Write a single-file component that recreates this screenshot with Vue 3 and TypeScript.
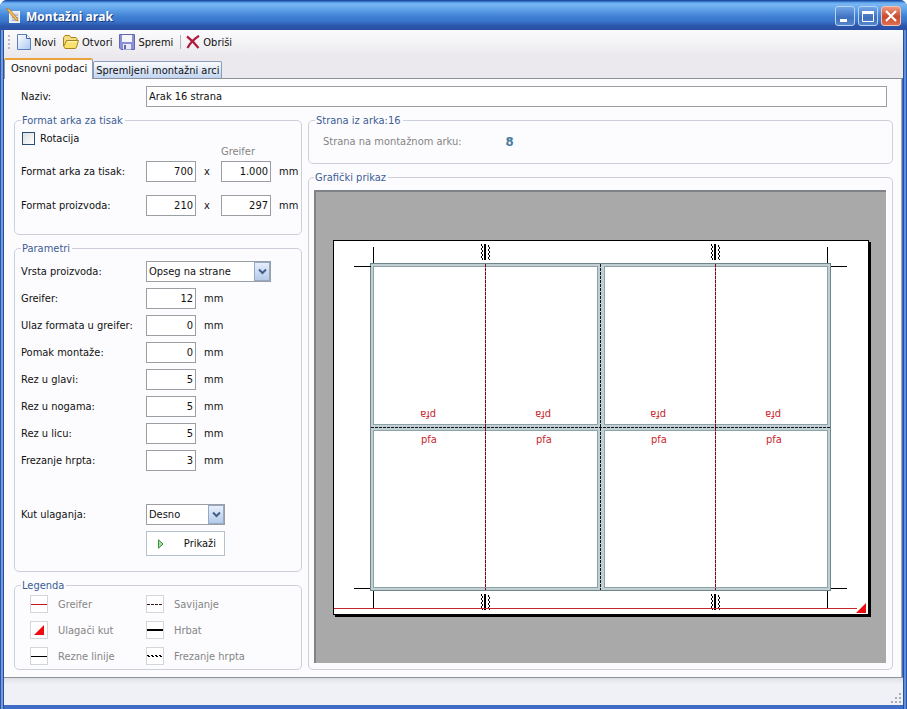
<script setup lang="ts">
import { reactive, ref } from 'vue'

interface Param {
  id: string
  label: string
  value: string
}

const tabs = ['Osnovni podaci', 'Spremljeni montažni arci']
const activeTab = ref(0)

const naziv = ref('Arak 16 strana')
const rotacija = ref(false)
const formatArka = reactive({ a: '700', b: '1.000' })
const formatProizvoda = reactive({ a: '210', b: '297' })
const vrsta = ref('Opseg na strane')
const kut = ref('Desno')

const params = reactive<Param[]>([
  { id: 'greifer', label: 'Greifer:', value: '12' },
  { id: 'ulaz', label: 'Ulaz formata u greifer:', value: '0' },
  { id: 'pomak', label: 'Pomak montaže:', value: '0' },
  { id: 'glava', label: 'Rez u glavi:', value: '5' },
  { id: 'noga', label: 'Rez u nogama:', value: '5' },
  { id: 'lice', label: 'Rez u licu:', value: '5' },
  { id: 'frezanje', label: 'Frezanje hrpta:', value: '3' },
])

const legendItems = [
  { kind: 'greifer', label: 'Greifer' },
  { kind: 'savijanje', label: 'Savijanje' },
  { kind: 'kut', label: 'Ulagači kut' },
  { kind: 'hrbat', label: 'Hrbat' },
  { kind: 'rez', label: 'Rezne linije' },
  { kind: 'frezanje', label: 'Frezanje hrpta' },
]

/* Sheet drawing, in preview units */
const pageColumns = [105, 220, 335, 450]
const foldLines = [169, 399]
const spineMarks = foldLines.flatMap((x) => [
  { x, y: 52 },
  { x, y: 402 },
])
</script>

<template>
  <div class="window">
    <header class="titlebar">
      <svg class="app-icon" width="16" height="18" viewBox="0 0 16 18" aria-hidden="true">
        <rect x="3.5" y="4.500" width="10" height="11" fill="#dfe7f5" stroke="#f4f4f4" />
        <path d="M6 8h6M6 10.500h6M6 13h5" stroke="#8798bd" />
        <path d="M0 1.500L3.500 2l8 9.500.5 2.500-2.500-1z" fill="#f5b851" stroke="#a06a24" stroke-width=".6" />
      </svg>
      <h1>Montažni arak</h1>
      <div class="window-buttons">
        <button type="button" aria-label="Minimize">
          <svg width="18" height="18" viewBox="0 0 18 18"><path d="M4 13.500h7" stroke="#fff" stroke-width="3" /></svg>
        </button>
        <button type="button" aria-label="Maximize">
          <svg width="18" height="18" viewBox="0 0 18 18"><path d="M3.500 4.500h11v10h-11z" fill="none" stroke="#fff" /><path d="M3 5.500h12" stroke="#fff" stroke-width="3" /></svg>
        </button>
        <button type="button" class="close" aria-label="Close">
          <svg width="18" height="18" viewBox="0 0 18 18"><path d="M4 4l10 10M14 4L4 14" stroke="#fff" stroke-width="2.200" /></svg>
        </button>
      </div>
    </header>

    <nav class="toolbar">
      <span class="grip"></span>
      <button type="button">
        <svg width="14" height="16" viewBox="0 0 14 16">
          <defs><linearGradient id="gNew" x2="1" y2="1"><stop stop-color="#fff" /><stop offset="1" stop-color="#a9c8f2" /></linearGradient></defs>
          <path d="M.5.5h9l4 4v11H.5z" fill="url(#gNew)" stroke="#5b7fb8" />
          <path d="M9.500.5v4h4" fill="#fff" stroke="#3c62a4" />
        </svg>
        Novi
      </button>
      <button type="button">
        <svg width="16" height="14" viewBox="0 0 16 14">
          <path d="M.5 11V2.500l1.500-2h4.500l1.500 2h5l1 1V7" fill="#f3dc80" stroke="#a8841c" />
          <path d="M.8 11.500L3.500 5.500h12l-2 6.500-1 1.500H2z" fill="#f9e36c" stroke="#a8841c" />
          <path d="M4.500 6.700h9.500" stroke="#fffbd0" />
        </svg>
        Otvori
      </button>
      <button type="button">
        <svg width="16" height="16" viewBox="0 0 16 16">
          <path d="M.5.500h15v15H2l-1.500-1.500z" fill="#8a90d8" stroke="#6468b4" />
          <path d="M3 1h10v7H3z" fill="#f4f6fc" />
          <path d="M4 10h8v5.500H4z" fill="#e8ebf5" />
          <path d="M5 11h2v4H5z" fill="#6468b4" />
        </svg>
        Spremi
      </button>
      <span class="separator"></span>
      <button type="button">
        <svg width="14" height="14" viewBox="0 0 14 14"><path d="M1 1.500Q7 6 12.500 13M13 .8Q5 6 1.500 13" fill="none" stroke="#b01c3c" stroke-width="2.200" /></svg>
        Obriši
      </button>
    </nav>

    <div class="tabs" role="tablist">
      <button
        v-for="(tab, i) in tabs"
        :key="tab"
        type="button"
        role="tab"
        :aria-selected="activeTab === i"
        :class="{ active: activeTab === i }"
        @click="activeTab = i"
      >
        {{ tab }}
      </button>
    </div>

    <main class="pane">
      <div class="name-row">
        <label for="naziv">Naziv:</label>
        <input id="naziv" v-model="naziv" type="text" />
      </div>

      <div class="columns">
        <div class="column">
          <fieldset class="format">
            <legend>Format arka za tisak</legend>
            <label class="check"><input v-model="rotacija" type="checkbox" />Rotacija</label>
            <div class="hint">Greifer</div>
            <div class="row">
              <label for="arak-a">Format arka za tisak:</label>
              <input id="arak-a" v-model="formatArka.a" class="num" type="text" />
              <span class="times">x</span>
              <input v-model="formatArka.b" class="num" type="text" aria-label="Format arka, Greifer" />
              <span>mm</span>
            </div>
            <div class="row">
              <label for="proizvod-a">Format proizvoda:</label>
              <input id="proizvod-a" v-model="formatProizvoda.a" class="num" type="text" />
              <span class="times">x</span>
              <input v-model="formatProizvoda.b" class="num" type="text" aria-label="Format proizvoda, visina" />
              <span>mm</span>
            </div>
          </fieldset>

          <fieldset class="params">
            <legend>Parametri</legend>
            <div class="row">
              <label for="vrsta">Vrsta proizvoda:</label>
              <span class="combo wide">
                <select id="vrsta" v-model="vrsta"><option>Opseg na strane</option></select>
                <span class="arrow"><svg width="9" height="7" viewBox="0 0 9 7"><path d="M1 1.500l3.500 3.500L8 1.500" fill="none" stroke="#435f88" stroke-width="2" /></svg></span>
              </span>
            </div>
            <div v-for="p in params" :key="p.id" class="row">
              <label :for="p.id">{{ p.label }}</label>
              <input :id="p.id" v-model="p.value" class="num" type="text" />
              <span>mm</span>
            </div>
            <div class="row apart">
              <label for="kut">Kut ulaganja:</label>
              <span class="combo">
                <select id="kut" v-model="kut"><option>Desno</option></select>
                <span class="arrow"><svg width="9" height="7" viewBox="0 0 9 7"><path d="M1 1.500l3.500 3.500L8 1.500" fill="none" stroke="#435f88" stroke-width="2" /></svg></span>
              </span>
            </div>
            <button type="button" class="show">
              <svg width="6" height="10" viewBox="0 0 6 10"><path d="M.5.8v8.400L5 5z" fill="#a9d8a0" stroke="#3d9440" /></svg>
              Prikaži
            </button>
          </fieldset>

          <fieldset class="legend-box">
            <legend>Legenda</legend>
            <ul>
              <li v-for="item in legendItems" :key="item.kind">
                <svg width="18" height="18" viewBox="0 0 18 18">
                  <rect x=".5" y=".5" width="17" height="17" fill="#fff" stroke="#d3d6da" />
                  <path v-if="item.kind === 'greifer'" d="M1 9.500h16" stroke="#c4141c" />
                  <path v-else-if="item.kind === 'savijanje'" d="M1 9.500h16" stroke="#3a1518" stroke-dasharray="3 1" />
                  <path v-else-if="item.kind === 'kut'" d="M14 4v10H4z" fill="#ee0c10" />
                  <path v-else-if="item.kind === 'hrbat'" d="M1 9h16" stroke="#000" stroke-width="2" />
                  <path v-else-if="item.kind === 'rez'" d="M1 9.500h16" stroke="#000" />
                  <g v-else stroke="#000"><path d="M1 8.500h16" stroke-dasharray="2 2" /><path d="M2 9.500h15" stroke-dasharray="2 2" /></g>
                </svg>
                {{ item.label }}
              </li>
            </ul>
          </fieldset>
        </div>

        <div class="column">
          <fieldset class="pages">
            <legend>Strana iz arka:16</legend>
            <p>
              <span>Strana na montažnom arku:</span>
              <output>8</output>
            </p>
          </fieldset>

          <fieldset class="preview">
            <legend>Grafički prikaz</legend>
            <div class="canvas">
              <svg viewBox="0 0 570 471" preserveAspectRatio="xMinYMin meet" role="img" aria-label="Grafički prikaz">
                <rect x="19" y="50" width="536" height="375" fill="#000" />
                <rect x="17.500" y="48.500" width="535" height="374" fill="#fff" stroke="#000" />

                <rect x="54.500" y="71.500" width="460" height="327" fill="#c2d0d4" stroke="#6d858b" />
                <g fill="#fff" stroke="#8aa2a8">
                  <rect x="57.500" y="74.500" width="224" height="158" />
                  <rect x="288.500" y="74.500" width="223" height="158" />
                  <rect x="57.500" y="238.500" width="224" height="157" />
                  <rect x="288.500" y="238.500" width="223" height="157" />
                </g>

                <g v-for="x in foldLines" :key="x">
                  <path :d="`M${x + 0.5} 72V398`" stroke="#f0808c" />
                  <path :d="`M${x + 0.5} 72V398`" stroke="#6a0f1a" stroke-dasharray="3 1" />
                </g>
                <path d="M284.500 72V398M55 235.500H514" stroke="#10161c" stroke-dasharray="3 1" />

                <g stroke="#000">
                  <path d="M57.500 55v16M38 74.500h17M511.500 55v16M515 74.500h16" />
                  <path d="M57.500 399v17M38 396.500h16M511.500 399v17M515 396.500h16" />
                </g>

                <g v-for="(m, i) in spineMarks" :key="i" :transform="`translate(${m.x} ${m.y})`" stroke="#000">
                  <path d="M0 0v16" stroke-width="2" />
                  <path d="M-3.500 0v16M3.500 1v15" stroke-dasharray="2 2" />
                  <path d="M-2.500 2v14M4.500 3v13" stroke-dasharray="2 2" />
                </g>

                <path d="M18 416.500H541" stroke="#c4262c" />
                <path d="M550 411v10h-10z" fill="#ee0c10" />

                <g class="pfa">
                  <template v-for="x in pageColumns" :key="x">
                    <text :x="x" y="251">pfa</text>
                    <text :transform="`translate(${x + 15} 219) rotate(180)`">pfa</text>
                  </template>
                </g>
              </svg>
            </div>
          </fieldset>
        </div>
      </div>
    </main>

    <footer class="statusbar">
      <svg width="12" height="12" viewBox="0 0 12 12" fill="#a9adb5"><path d="M8 0h2v2H8zM8 4h2v2H8zM4 4h2v2H4zM8 8h2v2H8zM4 8h2v2H4zM0 8h2v2H0z" /></svg>
    </footer>
  </div>
</template>

<style>
html,
body {
  margin: 0;
  background: #fff;
}
</style>

<style scoped>
.window {
  display: flex;
  flex-direction: column;
  box-sizing: border-box;
  min-height: 100vh;
  padding: 0 4px 4px;
  background: linear-gradient(90deg, #2c55a8 0 1px, #6f9be4 1px 3px, #2c4f94 3px 4px, transparent 4px calc(100% - 4px), #2c4f94 calc(100% - 4px) calc(100% - 3px), #5b92e2 calc(100% - 3px) calc(100% - 1px), #2c55a8 calc(100% - 1px)), #3f6cc4;
  border-radius: 7px 7px 0 0;
  font-family: 'DejaVu Sans Condensed', 'DejaVu Sans', sans-serif;
  font-size: 11px;
  line-height: 13px;
  color: #111;
}

button,
input,
select {
  font: inherit;
  color: inherit;
  box-sizing: border-box;
  margin: 0;
}

.titlebar {
  display: flex;
  align-items: center;
  gap: 4px;
  height: 30px;
  margin: 0 -4px;
  padding: 2px 6px 0;
  box-sizing: border-box;
  border-radius: 7px 7px 0 0;
  background: linear-gradient(#1f4fa4 0 1px, #4f96e4 2px, #7ab8f4 4px, #62a4ea 9px, #3d7ed2 17px, #3a76cc 21px, #2b55aa 26px, #2a4fa3);
}

h1 {
  margin: 0;
  flex: 1;
  padding-top: 2px;
  font: bold 12px/18px 'Open Sans', sans-serif;
  color: #fff;
  text-shadow: 1px 1px 0 #1d3c7c;
}

.window-buttons {
  display: flex;
  gap: 3px;
}

.window-buttons button {
  width: 20px;
  height: 20px;
  padding: 0;
  border: 1px solid #b9d3f3;
  border-radius: 3px;
  background: linear-gradient(#6fa6e8, #3f70bc 60%, #5486cc);
}

.window-buttons .close {
  border-color: #f3c3b8;
  background: linear-gradient(#ee9a80, #c94a2c 55%, #e07050);
}

.window-buttons svg {
  display: block;
}

.toolbar {
  display: flex;
  align-items: center;
  height: 26px;
  padding: 0 4px 2px;
  box-sizing: border-box;
  background: linear-gradient(#fbfbfc, #ebe9ed);
}

.toolbar button {
  display: flex;
  align-items: center;
  gap: 3px;
  padding: 0;
  margin-right: 7px;
  border: 0;
  background: none;
}

.grip {
  width: 2px;
  height: 14px;
  margin-right: 7px;
  background: repeating-linear-gradient(#b9bac2 0 2px, transparent 2px 4px);
}

.separator {
  width: 1px;
  height: 14px;
  margin-right: 5px;
  background: #b4b5bf;
}

.tabs {
  display: flex;
  align-items: flex-end;
  height: 22px;
  background: #ebe9ed;
}

.tabs button {
  height: 17px;
  padding: 0 2px;
  border: 1px solid #8a9cb8;
  border-bottom: 0;
  border-radius: 2px 2px 0 0;
  background: linear-gradient(#fafbfe, #c0d4f0);
  white-space: nowrap;
}

.tabs .active {
  position: relative;
  height: 21px;
  padding: 0 5px 2px 6px;
  margin-bottom: -1px;
  border-top: 2px solid #eba43c;
  background: #fcfcfe;
}

.pane {
  flex: 1;
  display: flex;
  flex-direction: column;
  margin-right: 1px;
  padding: 7px 8px 7px 10px;
  border-top: 1px solid #8d9199;
  border-right: 1px solid #a7abb6;
  background: #fcfcfe;
}

.name-row {
  display: flex;
  align-items: center;
  padding: 0 6px 7px 7px;
}

label {
  flex: none;
}

.name-row label,
.row label {
  width: 125px;
}

input[type='text'] {
  height: 21px;
  padding: 0 2px;
  border: 1px solid #9b9ea3;
  background: #fff;
}

.name-row input {
  flex: 1;
  min-width: 0;
}

.columns {
  flex: 1;
  display: grid;
  grid-template-columns: 288px minmax(0, 1fr);
  gap: 6px;
}

.column {
  display: flex;
  flex-direction: column;
  gap: 7px;
}

fieldset {
  min-width: 0;
  margin: 0;
  padding: 0 6px;
  border: 1px solid #cdd0da;
  border-radius: 5px;
}

legend {
  padding: 0 2px 0 1px;
  color: #3d5c96;
}

.format {
  padding-top: 5px;
  padding-bottom: 18px;
}

.check {
  display: flex;
  align-items: center;
  gap: 5px;
}

.check input {
  appearance: none;
  width: 13px;
  height: 13px;
  margin-left: 1px;
  border: 1px solid #2b4f74;
  background: linear-gradient(135deg, #dcdfe0, #fff);
}

.check input:checked {
  background: #2b4f74;
}

.hint {
  margin: 0 0 3px 200px;
  color: #858585;
}

.row {
  display: flex;
  align-items: center;
  gap: 8px;
  height: 21px;
}

.row label {
  margin-right: -8px;
}

.format .row + .row {
  margin-top: 13px;
}

.num {
  flex: none;
  width: 50px;
  text-align: right;
}

.times {
  flex: none;
  width: 9px;
}

.params {
  padding-top: 6px;
  padding-bottom: 15px;
}

.params .row {
  margin-bottom: 6px;
}

.params .apart {
  margin-top: 33px;
}

.combo {
  position: relative;
  width: 79px;
}

.combo.wide {
  width: 125px;
}

.combo select {
  appearance: none;
  display: block;
  width: 100%;
  height: 21px;
  padding: 0 18px 0 2px;
  border: 1px solid #9b9ea3;
  border-radius: 0;
  background: #fff;
}

.arrow {
  position: absolute;
  top: 1px;
  right: 1px;
  bottom: 1px;
  display: flex;
  align-items: center;
  justify-content: center;
  width: 16px;
  box-sizing: border-box;
  border: 1px solid #93a9c6;
  background: linear-gradient(#e6eefb, #b5cbe9);
  pointer-events: none;
}

.show {
  display: flex;
  align-items: center;
  justify-content: space-between;
  width: 79px;
  height: 25px;
  margin-left: 125px;
  padding: 0 8px 0 11px;
  border: 1px solid #b4c2d0;
  background: #fff;
}

.legend-box {
  padding-top: 3px;
  padding-bottom: 4px;
}

ul {
  display: grid;
  grid-template-columns: 116px auto;
  gap: 8px 0;
  margin: 0;
  padding: 0 0 0 9px;
  list-style: none;
  color: #858585;
}

li {
  display: flex;
  align-items: center;
  gap: 10px;
  white-space: nowrap;
}

.pages p {
  display: flex;
  align-items: center;
  gap: 44px;
  margin: 0;
  padding: 8px 8px 15px;
  color: #858585;
}

.pages output {
  font-size: 13px;
  font-weight: bold;
  color: #467ba0;
}

.preview {
  flex: 1;
  display: flex;
  flex-direction: column;
  padding: 6px 6px 6px 5px;
}

.canvas {
  flex: 1;
  display: flex;
  border: solid #7f8388;
  border-width: 2px 0 0 2px;
  background: #a9a9a9;
}

.canvas svg {
  display: block;
  width: 100%;
  height: auto;
}

.pfa {
  font-size: 11px;
  fill: #c8262e;
}

.statusbar {
  display: flex;
  align-items: flex-end;
  justify-content: flex-end;
  height: 28px;
  box-sizing: border-box;
  border-top: 1px solid #8f929a;
  background: linear-gradient(#dfe0e6, #eff1f7 6px);
}
</style>
